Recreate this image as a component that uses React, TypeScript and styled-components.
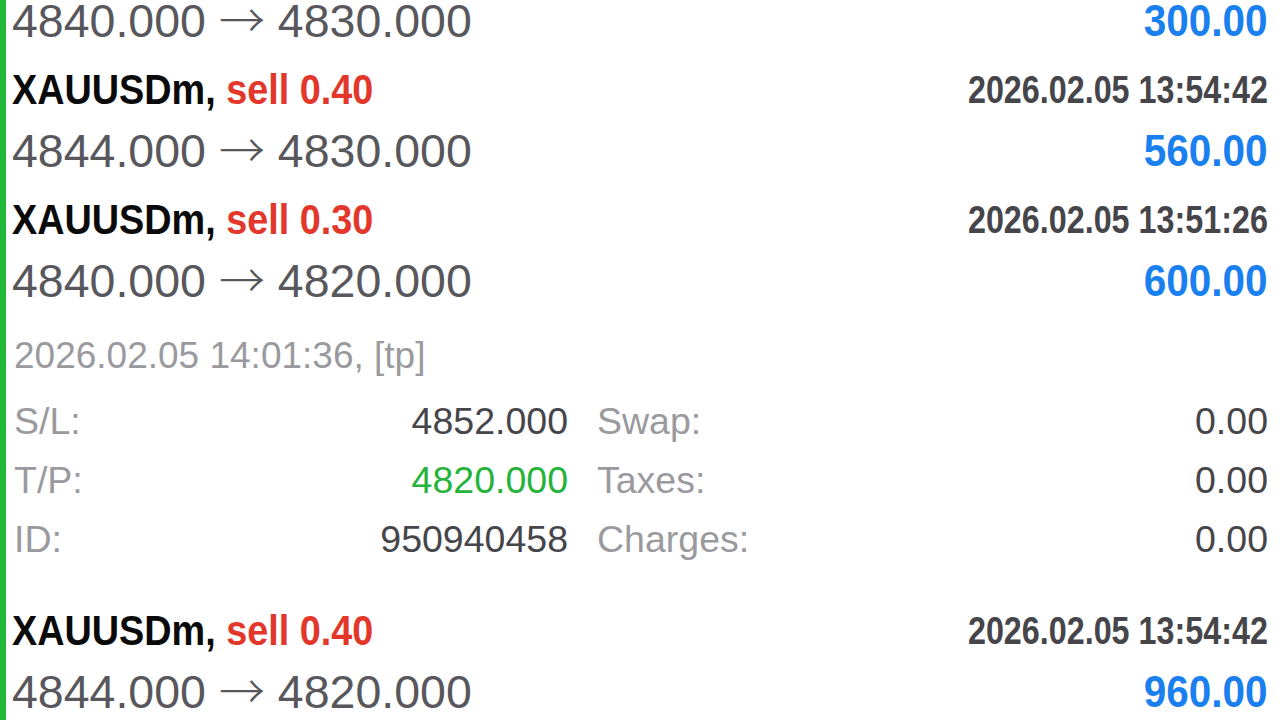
import styled, { createGlobalStyle } from 'styled-components';

interface TradeDetails {
  closed: string;
  sl: string;
  tp: string;
  id: string;
  swap: string;
  taxes: string;
  charges: string;
}
interface ITrade {
  symbol: string;
  side: string;
  volume: string;
  openPrice: string;
  closePrice: string;
  time: string;
  profit: string;
  details?: TradeDetails;
}

const trades: ITrade[] = [
  { symbol: 'XAUUSDm', side: 'sell', volume: '0.30', openPrice: '4840.000', closePrice: '4830.000', time: '2026.02.05 13:58:10', profit: '300.00' },
  { symbol: 'XAUUSDm', side: 'sell', volume: '0.40', openPrice: '4844.000', closePrice: '4830.000', time: '2026.02.05 13:54:42', profit: '560.00' },
  {
    symbol: 'XAUUSDm',
    side: 'sell',
    volume: '0.30',
    openPrice: '4840.000',
    closePrice: '4820.000',
    time: '2026.02.05 13:51:26',
    profit: '600.00',
    details: {
      closed: '2026.02.05 14:01:36, [tp]',
      sl: '4852.000',
      tp: '4820.000',
      id: '950940458',
      swap: '0.00',
      taxes: '0.00',
      charges: '0.00',
    },
  },
  { symbol: 'XAUUSDm', side: 'sell', volume: '0.40', openPrice: '4844.000', closePrice: '4820.000', time: '2026.02.05 13:54:42', profit: '960.00' },
];

function TradeRow({ trade }: { trade: ITrade }) {
  const { details } = trade;
  return (
    <Item>
      <Header>
        <Title>
          <Symbol>{trade.symbol},</Symbol> <Side>{trade.side} {trade.volume}</Side>
        </Title>
        <Time>{trade.time}</Time>
      </Header>
      <PriceLine>
        <Prices>
          {trade.openPrice} <Arrow>→</Arrow> {trade.closePrice}
        </Prices>
        <Profit>{trade.profit}</Profit>
      </PriceLine>
      {details && (
        <Details>
          <Closed>{details.closed}</Closed>
          <Grid>
            <Pair>
              <Label>S/L:</Label>
              <Value>{details.sl}</Value>
            </Pair>
            <Pair>
              <Label>Swap:</Label>
              <Value>{details.swap}</Value>
            </Pair>
            <Pair>
              <Label>T/P:</Label>
              <Value $tone="green">{details.tp}</Value>
            </Pair>
            <Pair>
              <Label>Taxes:</Label>
              <Value>{details.taxes}</Value>
            </Pair>
            <Pair>
              <Label>ID:</Label>
              <Value>{details.id}</Value>
            </Pair>
            <Pair>
              <Label>Charges:</Label>
              <Value>{details.charges}</Value>
            </Pair>
          </Grid>
        </Details>
      )}
    </Item>
  );
}

export default function App() {
  return (
    <>
      <GlobalStyle />
      <Page>
        <List>
          {trades.map((t, i) => (
            <TradeRow key={i} trade={t} />
          ))}
        </List>
      </Page>
    </>
  );
}

const GlobalStyle = createGlobalStyle`
  html, body {
    margin: 0;
    padding: 0;
    background: #fff;
    font-family: 'Liberation Sans', Arial, sans-serif;
  }
`;

const Page = styled.div`
  height: 720px;
  overflow: hidden;
  border-left: 6px solid #22b83a;
  background: #fff;
`;

// list is scrolled: first item's header sits above the viewport
const List = styled.div`
  margin-top: -76px;
  padding: 0 12px 0 6px;
`;

const Item = styled.div`
  display: flex;
  flex-direction: column;
`;

const Header = styled.div`
  height: 64px;
  box-sizing: border-box;
  padding-top: 8px;
  display: flex;
  align-items: center;
  justify-content: space-between;
`;

// condensed bold, like the phone's system font
const Title = styled.div`
  display: inline-block;
  font-weight: 700;
  font-size: 42px;
  white-space: nowrap;
  transform: scaleX(0.9);
  transform-origin: left center;
`;

const Symbol = styled.span`
  color: #0a0a0a;
`;

const Side = styled.span`
  color: #e3372b;
`;

const Time = styled.div`
  display: inline-block;
  font-weight: 700;
  font-size: 38px;
  color: #45454a;
  white-space: nowrap;
  transform: scaleX(0.85);
  transform-origin: right center;
`;

const PriceLine = styled.div`
  height: 66px;
  display: flex;
  align-items: center;
  justify-content: space-between;
`;

const Prices = styled.div`
  font-size: 46.5px;
  color: #58585c;
  white-space: nowrap;
`;

const Arrow = styled.span`
  font-family: 'Noto Sans CJK JP', 'DejaVu Sans', sans-serif;
  font-weight: 300;
  font-size: 46px;
  line-height: 1;
  color: #58585c;
`;

const Profit = styled.div`
  display: inline-block;
  font-weight: 700;
  font-size: 44px;
  color: #1a80f0;
  white-space: nowrap;
  transform: scaleX(0.92);
  transform-origin: right center;
`;

const Details = styled.div`
  padding: 12px 0 26px 2px;
`;

const Closed = styled.div`
  height: 60px;
  margin-bottom: 6px;
  display: flex;
  align-items: center;
  font-size: 37px;
  color: #9a9a9e;
`;

const Grid = styled.div`
  display: grid;
  grid-template-columns: 554px 1fr;
  column-gap: 29px;
  grid-auto-rows: 59px;
`;

const Pair = styled.div`
  display: flex;
  align-items: center;
  justify-content: space-between;
  font-size: 37.5px;
`;

const Label = styled.span`
  color: #9a9a9e;
`;

const Value = styled.span<{ $tone?: 'green' }>`
  color: ${({ $tone }) => ($tone === 'green' ? '#25b33c' : '#46464a')};
`;
